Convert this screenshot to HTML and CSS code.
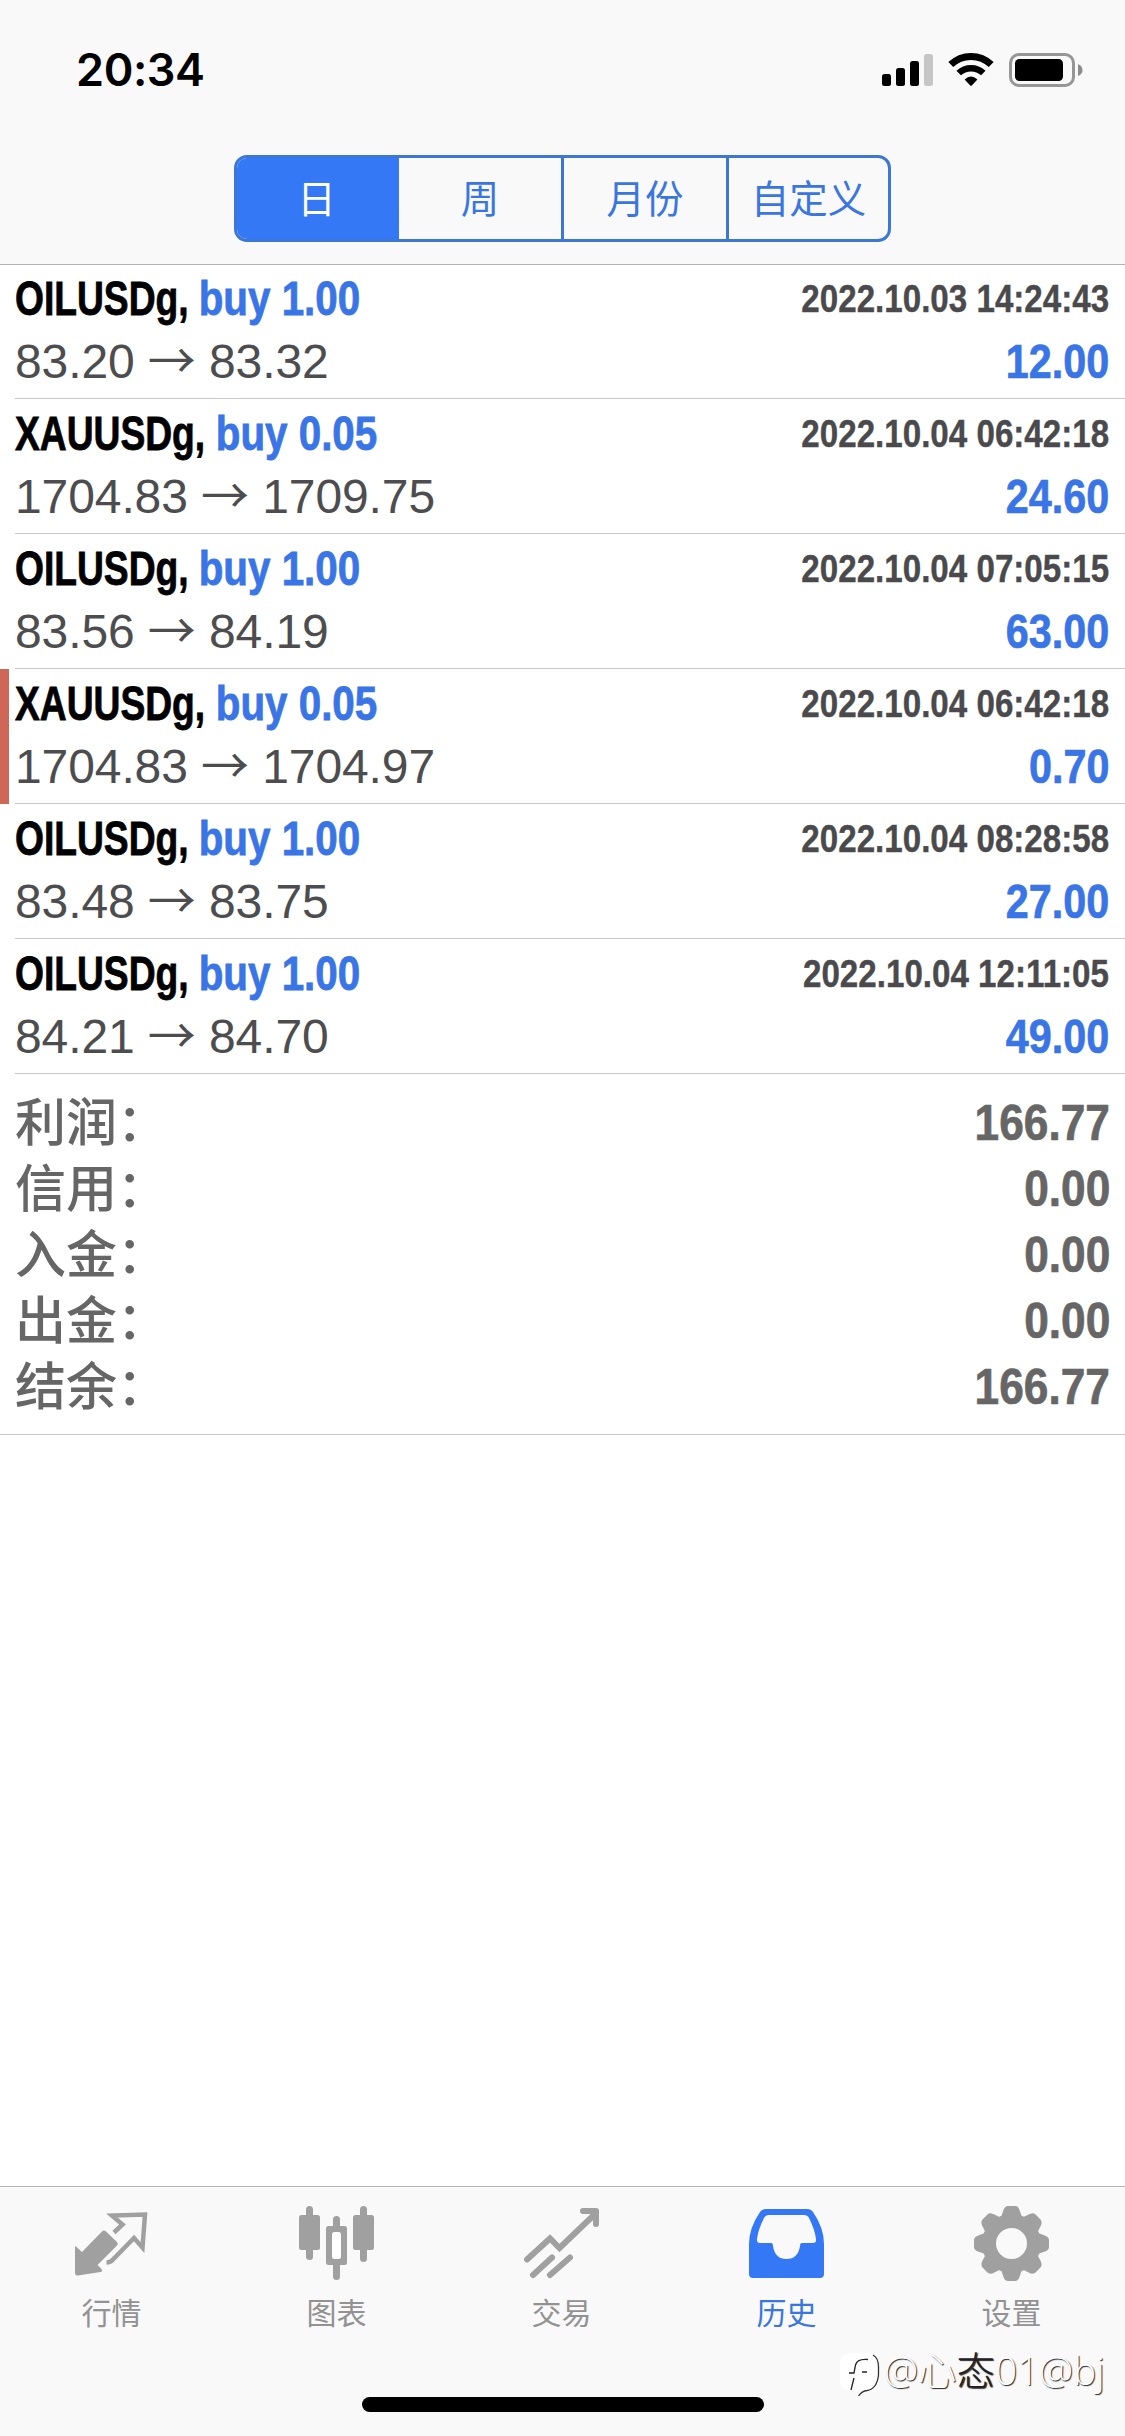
FILE: index.html
```html
<!DOCTYPE html>
<html lang="zh-CN">
<head>
<meta charset="utf-8">
<title>历史</title>
<link rel="stylesheet" href="styles.css">
</head>
<body>
<div class="screen">
  <header class="header">
    <div class="status">
      <span class="clock">20:34</span>
      <svg class="status-icons" width="202" height="36" viewBox="0 0 202 36">
        <g fill="#000">
          <rect x="0" y="22" width="9" height="12" rx="2.5"/>
          <rect x="14" y="16" width="9" height="18" rx="2.5"/>
          <rect x="28" y="9" width="9" height="25" rx="2.5"/>
        </g>
        <rect x="42" y="2" width="9" height="32" rx="2.5" fill="#c6c6c6"/>
        <g fill="none" stroke="#000">
          <path d="M68.800 12.600A29 29 0 0 1 109.200 12.600" stroke-width="7"/>
          <path d="M76.700 21.000A18 18 0 0 1 101.300 21.000" stroke-width="6.500"/>
        </g>
        <path d="M82.600 27.400Q89 21.600 95.400 27.400L89.800 33.400Q89 34.200 88.200 33.400Z"/>
        <rect x="128.500" y="2.500" width="63" height="31" rx="8.500" fill="none" stroke="#969696" stroke-width="3"/>
        <rect x="133" y="7" width="48" height="22" rx="4.500"/>
        <path d="M196 12q4.500 2 4.500 6t-4.500 6z" fill="#8c8c8c"/>
      </svg>
    </div>
    <nav class="segments">
      <span class="segment active">日</span>
      <span class="segment">周</span>
      <span class="segment">月份</span>
      <span class="segment">自定义</span>
    </nav>
  </header>

  <main class="content">
    <section class="deals">
      <article class="deal">
        <div class="line"><b class="title">OILUSDg, <span class="side">buy 1.00</span></b><time class="date">2022.10.03 14:24:43</time></div>
        <div class="line"><span class="price">83.20 <i class="arrow">→</i> 83.32</span><b class="profit">12.00</b></div>
      </article>
      <article class="deal">
        <div class="line"><b class="title">XAUUSDg, <span class="side">buy 0.05</span></b><time class="date">2022.10.04 06:42:18</time></div>
        <div class="line"><span class="price">1704.83 <i class="arrow">→</i> 1709.75</span><b class="profit">24.60</b></div>
      </article>
      <article class="deal">
        <div class="line"><b class="title">OILUSDg, <span class="side">buy 1.00</span></b><time class="date">2022.10.04 07:05:15</time></div>
        <div class="line"><span class="price">83.56 <i class="arrow">→</i> 84.19</span><b class="profit">63.00</b></div>
      </article>
      <article class="deal stopped">
        <div class="line"><b class="title">XAUUSDg, <span class="side">buy 0.05</span></b><time class="date">2022.10.04 06:42:18</time></div>
        <div class="line"><span class="price">1704.83 <i class="arrow">→</i> 1704.97</span><b class="profit">0.70</b></div>
      </article>
      <article class="deal">
        <div class="line"><b class="title">OILUSDg, <span class="side">buy 1.00</span></b><time class="date">2022.10.04 08:28:58</time></div>
        <div class="line"><span class="price">83.48 <i class="arrow">→</i> 83.75</span><b class="profit">27.00</b></div>
      </article>
      <article class="deal">
        <div class="line"><b class="title">OILUSDg, <span class="side">buy 1.00</span></b><time class="date">2022.10.04 12:11:05</time></div>
        <div class="line"><span class="price">84.21 <i class="arrow">→</i> 84.70</span><b class="profit">49.00</b></div>
      </article>
    </section>
    <section class="summary">
      <div class="total"><span class="label">利润：</span><b class="sum">166.77</b></div>
      <div class="total"><span class="label">信用：</span><b class="sum">0.00</b></div>
      <div class="total"><span class="label">入金：</span><b class="sum">0.00</b></div>
      <div class="total"><span class="label">出金：</span><b class="sum">0.00</b></div>
      <div class="total"><span class="label">结余：</span><b class="sum">166.77</b></div>
    </section>
  </main>

  <footer class="footer">
    <nav class="tabs">
      <a class="tab">
        <svg class="icon" width="75" height="75" viewBox="0 0 75 75">
          <path d="M1 41.500Q1 39.500 2.500 41L8 46L28 25.500Q30 23.500 32 25.500L43 36Q44.500 38 43 39.500L23.500 59L27.500 63Q29 65.500 26.500 66L4 69.500Q1 70 1 67Z" fill="#a0a0a0"/>
          <path d="M40 26.500L48.500 18.500L38 9.500L71 8.500L68.500 41.500L60 32L39 53.500Q36.500 56.500 32.500 56.500" fill="none" stroke="#a0a0a0" stroke-width="4.500"/>
        </svg>
        <span>行情</span>
      </a>
      <a class="tab">
        <svg class="icon" width="75" height="75" viewBox="0 0 75 75" fill="#a0a0a0">
          <rect x="7" y="0" width="7" height="54" rx="3.500"/>
          <rect x="0" y="9" width="21" height="35" rx="2.500"/>
          <rect x="61" y="0" width="7" height="56" rx="3.500"/>
          <rect x="54" y="9" width="21" height="35" rx="2.500"/>
          <rect x="34" y="10" width="7" height="64" rx="3.500"/>
          <rect x="27" y="20" width="21" height="39" rx="2.500"/>
          <rect x="33" y="26" width="9" height="27" rx="2.500" fill="#fff"/>
        </svg>
        <span>图表</span>
      </a>
      <a class="tab">
        <svg class="icon" width="75" height="75" viewBox="0 0 75 75" fill="none" stroke="#a0a0a0" stroke-width="6" stroke-linecap="round">
          <path d="M3 53.500L26 32.500L35.500 42L71 8" />
          <path d="M59 5H72V18" stroke-linejoin="round"/>
          <path d="M9 69L28 51.500M26 69L46 51.500"/>
        </svg>
        <span>交易</span>
      </a>
      <a class="tab current">
        <svg class="icon" width="75" height="75" viewBox="0 0 75 75">
          <path fill="#3478f6" fill-rule="evenodd" d="M17 3H58Q62 3 64 6Q75 22 75 38V68Q75 72 71 72H4Q0 72 0 68V38Q0 22 11 6Q13 3 17 3ZM20 9Q16.500 9 15 12Q9 24 8 33Q7.500 37 11 37H22Q24 37 24 40Q26 53 37.500 53Q49 53 51 40Q51 37 53 37H64Q67.500 37 67 33Q66 24 60 12Q58.500 9 55 9Z"/>
        </svg>
        <span>历史</span>
      </a>
      <a class="tab">
        <svg class="icon" width="75" height="75" viewBox="0 0 75 75" fill="#a0a0a0">
          <path fill-rule="evenodd" d="M37.500 8a29.500 29.500 0 1 0 0 59a29.500 29.500 0 1 0 0-59zM37.500 22a15.500 15.500 0 1 1 0 31a15.500 15.500 0 1 1 0-31z"/>
          <g id="teeth">
            <path d="M24.500 14.500Q28 10.500 29 5.500Q30.500 0 34 0H41Q44.500 0 46 5.500Q47 10.500 50.500 14.500Z"/>
            <path transform="rotate(90 37.500 37.500)" d="M24.500 14.500Q28 10.500 29 5.500Q30.500 0 34 0H41Q44.500 0 46 5.500Q47 10.500 50.500 14.500Z"/>
            <path transform="rotate(180 37.500 37.500)" d="M24.500 14.500Q28 10.500 29 5.500Q30.500 0 34 0H41Q44.500 0 46 5.500Q47 10.500 50.500 14.500Z"/>
            <path transform="rotate(270 37.500 37.500)" d="M24.500 14.500Q28 10.500 29 5.500Q30.500 0 34 0H41Q44.500 0 46 5.500Q47 10.500 50.500 14.500Z"/>
          </g>
          <use href="#teeth" transform="rotate(45 37.500 37.500)"/>
        </svg>
        <span>设置</span>
      </a>
    </nav>
    <div class="home"></div>
  </footer>

  <div class="watermark">
    <svg width="40" height="46" viewBox="0 0 40 46">
      <rect x="0" y="2" width="38" height="38" rx="9" fill="#fff"/>
      <path d="M33 4Q38.500 7 38.500 16V24Q37 38 27 39.500Q22 40 18.500 45" fill="none" stroke="#333" stroke-width="1.300"/>
      <path d="M28 8.500Q17 7.500 15.500 14L14 22H9M14 27L11 39M27 21H22" fill="none" stroke="#222" stroke-width="1.300"/>
    </svg>
    <span>@心<em>态</em>01@bj</span>
  </div>
</div>
</body>
</html>
```
FILE: styles.css
```css
* { box-sizing: border-box; }

body {
  margin: 0;
  background: #fff;
  font-family: "Liberation Sans", "Noto Sans CJK SC", sans-serif;
}

.screen {
  position: relative;
  display: flex;
  flex-direction: column;
  width: 1125px;
  height: 2436px;
  overflow: hidden;
}

/* Header */
.header {
  flex: none;
  height: 264px;
  background: #f9f9f9;
  box-shadow: 0 1px #b2b2b2;
}

.status {
  display: flex;
  justify-content: space-between;
  align-items: center;
  height: 155px;
  padding: 0 41px 16px 76px;
}

.clock {
  font: 600 45px/58px Inter, sans-serif;
  letter-spacing: -0.4px;
}

.segments {
  display: grid;
  grid-template-columns: 162px 165px 165px 159px;
  width: 657px;
  height: 87px;
  margin: 0 auto;
  border: 3px solid #3d77d6;
  border-radius: 13px;
  background: #f9f9f9;
  overflow: hidden;
}

.segment {
  display: flex;
  align-items: center;
  justify-content: center;
  padding-bottom: 5px;
  border-right: 3px solid #3d77d6;
  color: #3a76e2;
  font: 38.500px/60px "Noto Sans CJK SC", sans-serif;
}

.segment:last-child { border-right: 0; }

.segment.active {
  margin: -3px 0 -3px -3px;
  border: 0;
  background: #3478f6;
  color: #fff;
}

/* Deals */
.content { flex: 1; }

.deal {
  display: grid;
  grid-template-rows: 60px 60px;
  row-gap: 3px;
  height: 135px;
  padding: 5px 16px 0 15px;
  background: linear-gradient(#c8c7cc, #c8c7cc) 15px 134px / 100% 1px no-repeat;
}

.deal.stopped {
  box-shadow: inset 9px 0 #cf6759;
}

.line {
  display: flex;
  justify-content: space-between;
  line-height: 60px;
  white-space: nowrap;
}

.title {
  font-size: 48px;
  -webkit-text-stroke: 0.8px currentColor;
  transform: scaleX(0.775);
  transform-origin: left;
}

.side {
  display: inline-block;
  color: #3975e6;
  transform: scaleX(1.085);
  transform-origin: left;
}

.date {
  color: #4a4a4d;
  font-size: 39px;
  font-weight: bold;
  -webkit-text-stroke: 0.4px currentColor;
  transform: scaleX(0.85);
  transform-origin: right;
}

.price {
  color: #4d4d4f;
  font-size: 48px;
  letter-spacing: -0.1px;
}

.arrow {
  font: 48px/1 "Noto Sans CJK SC", sans-serif;
}

.profit {
  color: #3975e6;
  font-size: 48px;
  -webkit-text-stroke: 0.7px currentColor;
  transform: scaleX(0.86);
  transform-origin: right;
}

/* Summary */
.summary {
  height: 361px;
  padding: 16px 15px 0;
  border-bottom: 1px solid #c8c7cc;
  color: #666;
}

.total {
  display: flex;
  justify-content: space-between;
  height: 66px;
  line-height: 66px;
}

.label {
  padding-top: 1px;
  font-size: 51px;
  font-weight: 500;
}

.sum {
  font-size: 50px;
  -webkit-text-stroke: 0.7px currentColor;
  transform: scaleX(0.885);
  transform-origin: right;
}

/* Footer */
.footer {
  flex: none;
  height: 250px;
  border-top: 1px solid #b2b2b2;
  background: #f9f9f9;
}

.tabs {
  display: grid;
  grid-template-columns: repeat(5, 225px);
  height: 210px;
  margin-left: -1px;
  padding-top: 19px;
}

.tab {
  display: flex;
  flex-direction: column;
  align-items: center;
  gap: 10px;
  color: #929292;
  font: 30px/40px "Noto Sans CJK SC", sans-serif;
}

.tab.current { color: #3a76e2; }

.home {
  width: 402px;
  height: 15px;
  margin: 0 auto;
  border-radius: 8px;
  background: #000;
}

/* Account mark over the footer */
.watermark {
  position: absolute;
  left: 840px;
  top: 2350px;
  display: flex;
  align-items: center;
  gap: 4px;
  color: #fff;
  font: 300 38.500px/40px "Open Sans", "Noto Sans CJK SC", sans-serif;
  text-shadow: 1px 1px 1px #222;
  white-space: nowrap;
}

.watermark span { padding-bottom: 8px; }

.watermark em {
  color: #222;
  font-style: normal;
}
```
